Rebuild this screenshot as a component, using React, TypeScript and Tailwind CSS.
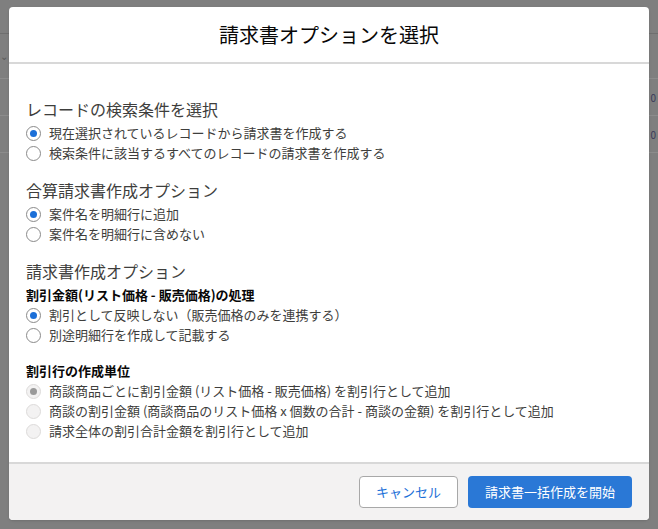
import React from 'react';

const font = { fontFamily: '"Noto Sans CJK JP", "Noto Sans", sans-serif' };

function Radio({ checked, disabled, label }: { checked?: boolean; disabled?: boolean; label: string }) {
  return (
    <label className="flex items-center gap-[8px] h-[20px] text-[13px] text-[#3e3e3c]">
      <span
        className={`w-[15px] h-[15px] rounded-full border flex items-center justify-center ${
          disabled ? 'border-[#dddbda] bg-[#f3f2f2]' : 'border-[#8a8a8a] bg-white'
        }`}
      >
        {checked && <span className={`w-[7px] h-[7px] rounded-full ${disabled ? 'bg-[#9a9a9a]' : 'bg-[#1b6fd8]'}`} />}
      </span>
      <span>{label}</span>
    </label>
  );
}

export default function App() {
  return (
    <div className="relative w-[658px] h-[529px] bg-[#7f7f7f] overflow-hidden" style={font}>
      {/* faint page behind overlay */}
      <div className="absolute left-0 right-0 top-[33px] h-px bg-[#6f6f6f]" />
      <div className="absolute left-0 top-[48px] w-[9px] h-[10px] text-[#5a5a5a] text-[10px]">⌄</div>
      <div className="absolute left-0 w-[9px] top-[78px] h-px bg-[#8c8c8c]" />
      <div className="absolute left-0 w-[9px] top-[115px] h-px bg-[#8c8c8c]" />
      <div className="absolute left-0 w-[9px] top-[152px] h-px bg-[#8c8c8c]" />
      <div className="absolute right-0 w-[9px] top-[78px] h-px bg-[#8c8c8c]" />
      <div className="absolute right-0 w-[9px] top-[115px] h-px bg-[#8c8c8c]" />
      <div className="absolute right-0 w-[9px] top-[152px] h-px bg-[#8c8c8c]" />
      <div className="absolute right-[2px] top-[90px] text-[10px] text-[#3a3a5a]">0</div>
      <div className="absolute right-[2px] top-[127px] text-[10px] text-[#3a3a5a]">0</div>

      <div className="absolute left-[9px] top-[7px] w-[640px] h-[513px] bg-white rounded-[4px] flex flex-col overflow-hidden shadow">
        <div className="h-[57px] flex items-center justify-center text-[20px] text-[#080707] border-b-2 border-[#d8d8d8] shrink-0">
          請求書オプションを選択
        </div>
        <div className="flex-1 px-[17px] pt-[34px] text-[#3e3e3c]">
          <div className="text-[16px] leading-[22px] mb-[3px]">レコードの検索条件を選択</div>
          <Radio checked label="現在選択されているレコードから請求書を作成する" />
          <Radio label="検索条件に該当するすべてのレコードの請求書を作成する" />

          <div className="text-[16px] leading-[22px] mt-[16px] mb-[3px]">合算請求書作成オプション</div>
          <Radio checked label="案件名を明細行に追加" />
          <Radio label="案件名を明細行に含めない" />

          <div className="text-[16px] leading-[22px] mt-[16px] mb-[3px]">請求書作成オプション</div>
          <div className="text-[13px] font-bold text-[#080707] leading-[20px]">割引金額(リスト価格 - 販売価格)の処理</div>
          <Radio checked label="割引として反映しない（販売価格のみを連携する）" />
          <Radio label="別途明細行を作成して記載する" />

          <div className="text-[13px] font-bold text-[#080707] leading-[20px] mt-[16px]">割引行の作成単位</div>
          <Radio checked disabled label="商談商品ごとに割引金額 (リスト価格 - 販売価格) を割引行として追加" />
          <Radio disabled label="商談の割引金額 (商談商品のリスト価格 x 個数の合計 - 商談の金額) を割引行として追加" />
          <Radio disabled label="請求全体の割引合計金額を割引行として追加" />
        </div>
        <div className="h-[58px] shrink-0 bg-[#f3f2f2] border-t-2 border-[#d8d8d8] flex items-center justify-end gap-[10px] pr-[17px]">
          <button className="h-[32px] w-[99px] rounded-[4px] border border-[#a8a8a8] bg-white text-[#1b6fd8] text-[13px]">
            キャンセル
          </button>
          <button className="h-[32px] w-[164px] rounded-[4px] bg-[#2a78d6] text-white text-[13px]">
            請求書一括作成を開始
          </button>
        </div>
      </div>
    </div>
  );
}
